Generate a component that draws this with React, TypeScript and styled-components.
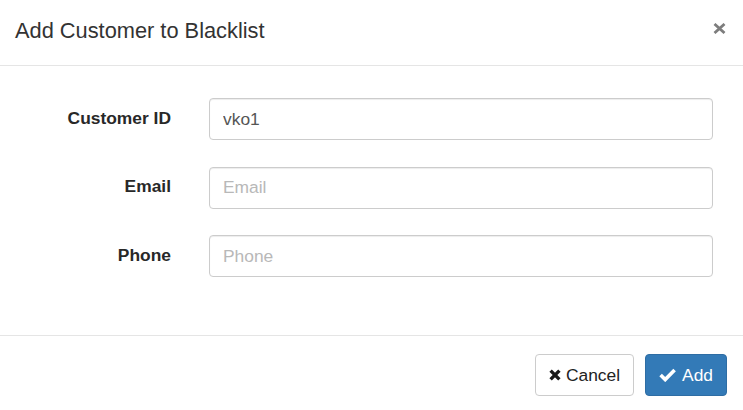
import React from "react";
import styled, { createGlobalStyle } from "styled-components";

const Global = createGlobalStyle`
  html, body { margin: 0; padding: 0; background: #fff; }
  body { font-family: "Liberation Sans", Arial, Helvetica, sans-serif; color: #333; }
  * { box-sizing: border-box; }
`;

const Modal = styled.div`
  width: 743px;
  background: #fff;
`;

const Header = styled.div`
  display: flex;
  justify-content: space-between;
  align-items: flex-start;
  padding: 15px 17px 19px 15px;
  border-bottom: 1px solid #e5e5e5;
`;

const Title = styled.h4`
  margin: 0;
  font-size: 21.8px;
  line-height: 31px;
  font-weight: 400;
  color: #333;
`;

const CloseButton = styled.button`
  margin-top: 8px;
  padding: 0;
  border: 0;
  background: transparent;
  width: 13px;
  height: 11px;
  display: flex;
  cursor: pointer;
`;

const Body = styled.div`
  padding: 32px 30px 58px 0;
`;

const Form = styled.form`
  display: grid;
  grid-template-columns: 171px 1fr;
  column-gap: 38px;
  row-gap: 26.5px;
  align-items: center;
`;

const Label = styled.label`
  text-align: right;
  padding-bottom: 2px;
  font-size: 17.4px;
  font-weight: 700;
  color: #282828;
`;

const Input = styled.input`
  height: 42px;
  width: 100%;
  padding: 0 13px;
  border: 1px solid #ccc;
  border-radius: 4px;
  font-family: inherit;
  font-size: 17.4px;
  color: #555;
  box-shadow: inset 0 1px 1px rgba(0, 0, 0, 0.075);
  outline: none;
  &::placeholder { color: #b8b8b8; opacity: 1; }
`;

const Footer = styled.div`
  display: flex;
  justify-content: flex-end;
  gap: 11px;
  padding: 18px 16px 14px;
  border-top: 1px solid #e5e5e5;
`;

const Button = styled.button<{ $primary?: boolean }>`
  display: inline-flex;
  align-items: center;
  gap: ${(p) => (p.$primary ? "6px" : "5px")};
  height: 42px;
  padding: 0 13px;
  border-radius: 4px;
  font-family: inherit;
  font-size: 17.4px;
  cursor: pointer;
  border: 1px solid ${(p) => (p.$primary ? "#2e6da4" : "#ccc")};
  background: ${(p) => (p.$primary ? "#337ab7" : "#fff")};
  color: ${(p) => (p.$primary ? "#fff" : "#222")};
`;

const Close = () => (
  <svg width="13" height="11" viewBox="0 0 13 11">
    <path d="M1.5 1 L11.5 10 M11.5 1 L1.5 10" stroke="#7d7d7d" strokeWidth="2.8" />
  </svg>
);

const RemoveIcon = () => (
  <svg width="12" height="12" viewBox="0 0 12 12">
    <path d="M1.6 1.6 L10.4 10.4 M10.4 1.6 L1.6 10.4" stroke="#1a1a1a" strokeWidth="3.4" />
  </svg>
);

const OkIcon = () => (
  <svg width="17" height="14" viewBox="0 0 17 14">
    <path d="M1.6 7 L6.2 11.6 L15.6 2" fill="none" stroke="#fff" strokeWidth="3.6" />
  </svg>
);

export default function App() {
  return (
    <>
      <Global />
      <Modal>
        <Header>
          <Title>Add Customer to Blacklist</Title>
          <CloseButton aria-label="Close">
            <Close />
          </CloseButton>
        </Header>
        <Body>
          <Form>
            <Label htmlFor="cid">Customer ID</Label>
            <Input id="cid" defaultValue="vko1" />
            <Label htmlFor="email">Email</Label>
            <Input id="email" placeholder="Email" />
            <Label htmlFor="phone">Phone</Label>
            <Input id="phone" placeholder="Phone" />
          </Form>
        </Body>
        <Footer>
          <Button>
            <RemoveIcon />
            Cancel
          </Button>
          <Button $primary>
            <OkIcon />
            Add
          </Button>
        </Footer>
      </Modal>
    </>
  );
}
